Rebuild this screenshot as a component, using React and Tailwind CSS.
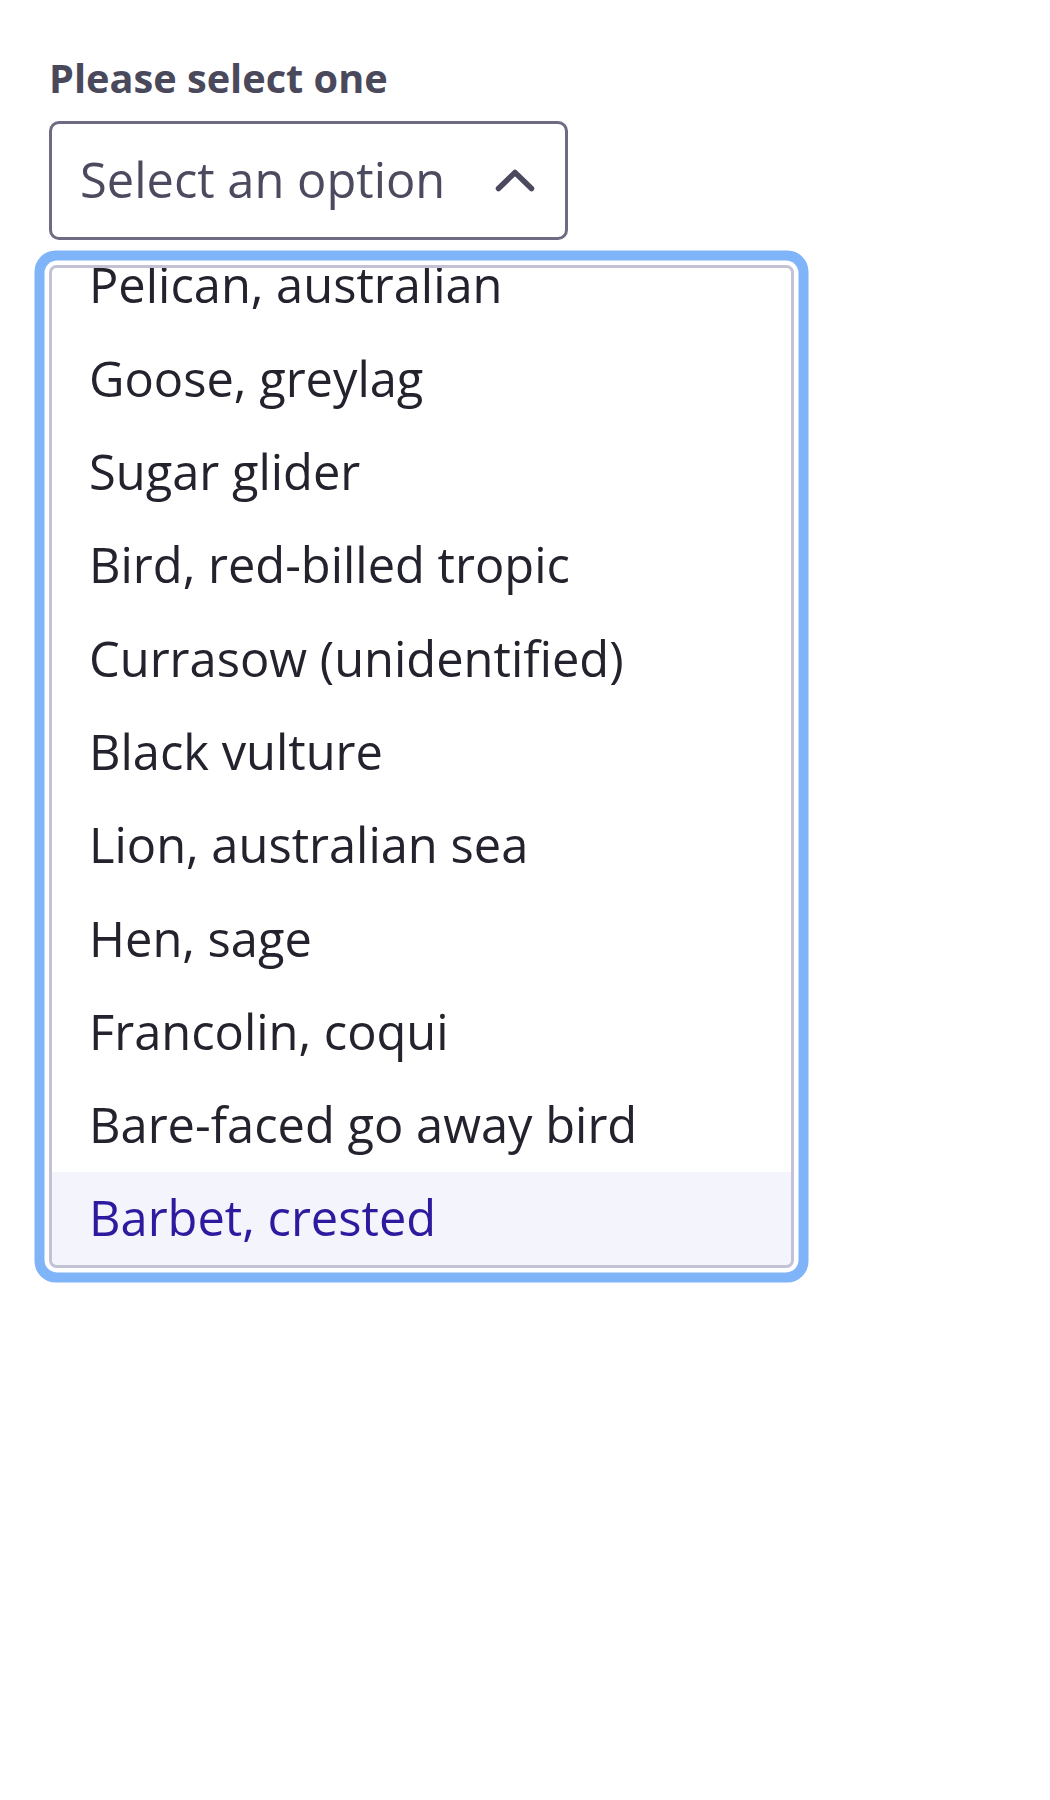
import React, { useLayoutEffect, useRef } from "react";

const options = [
  "Pelican, australian",
  "Goose, greylag",
  "Sugar glider",
  "Bird, red-billed tropic",
  "Currasow (unidentified)",
  "Black vulture",
  "Lion, australian sea",
  "Hen, sage",
  "Francolin, coqui",
  "Bare-faced go away bird",
  "Barbet, crested",
];

const ChevronUp = () => (
  <svg className="w-[40px] h-[26px] text-[#4a495d]" viewBox="0 0 40 26" fill="none" stroke="currentColor" strokeWidth="5.5" strokeLinecap="round" strokeLinejoin="round">
    <path d="M3.5 21.5L20 5.5l16.5 16" />
  </svg>
);

export default function App() {
  const listRef = useRef(null);

  // open listbox is scrolled down to the active option
  useLayoutEffect(() => {
    if (listRef.current) listRef.current.scrollTop = listRef.current.scrollHeight;
  }, []);

  return (
    <div className="min-h-[1800px] bg-white pl-[49px] pt-[51px] font-['Open_Sans',sans-serif]">
      <label className="block text-[39.7px] leading-[1.362] font-bold text-[#4a495c] mb-[16px]">Please select one</label>

      <button
        type="button"
        className="flex items-center justify-between w-[519px] h-[119px] border-[3px] border-[#6d6c83] rounded-[10px] pl-[28px] pr-[30px] pb-[2px] bg-white"
      >
        <span className="text-[48.8px] leading-[1.362] text-[#4b4a5f]">Select an option</span>
        <ChevronUp />
      </button>

      <div
        ref={listRef}
        className="mt-[25px] w-[745px] h-[1003px] overflow-y-auto [scrollbar-width:none] border-[3px] border-[#c3c2d5] rounded-[8px] bg-white ring-[10px] ring-[#80b4f9] ring-offset-[4.5px] ring-offset-white"
      >
        <ul>
          {options.map((opt, i) => {
            const active = i === options.length - 1;
            return (
              <li
                key={opt}
                className={
                  active
                    ? "flex items-center h-[93.3px] pl-[37px] pb-[2px] text-[48.8px] leading-[1.362] bg-[#f3f4fc] text-[#2e1a9f]"
                    : "flex items-center h-[93.3px] pl-[37px] pb-[2px] text-[48.8px] leading-[1.362] text-[#23222d]"
                }
              >
                {opt}
              </li>
            );
          })}
        </ul>
      </div>
    </div>
  );
}
